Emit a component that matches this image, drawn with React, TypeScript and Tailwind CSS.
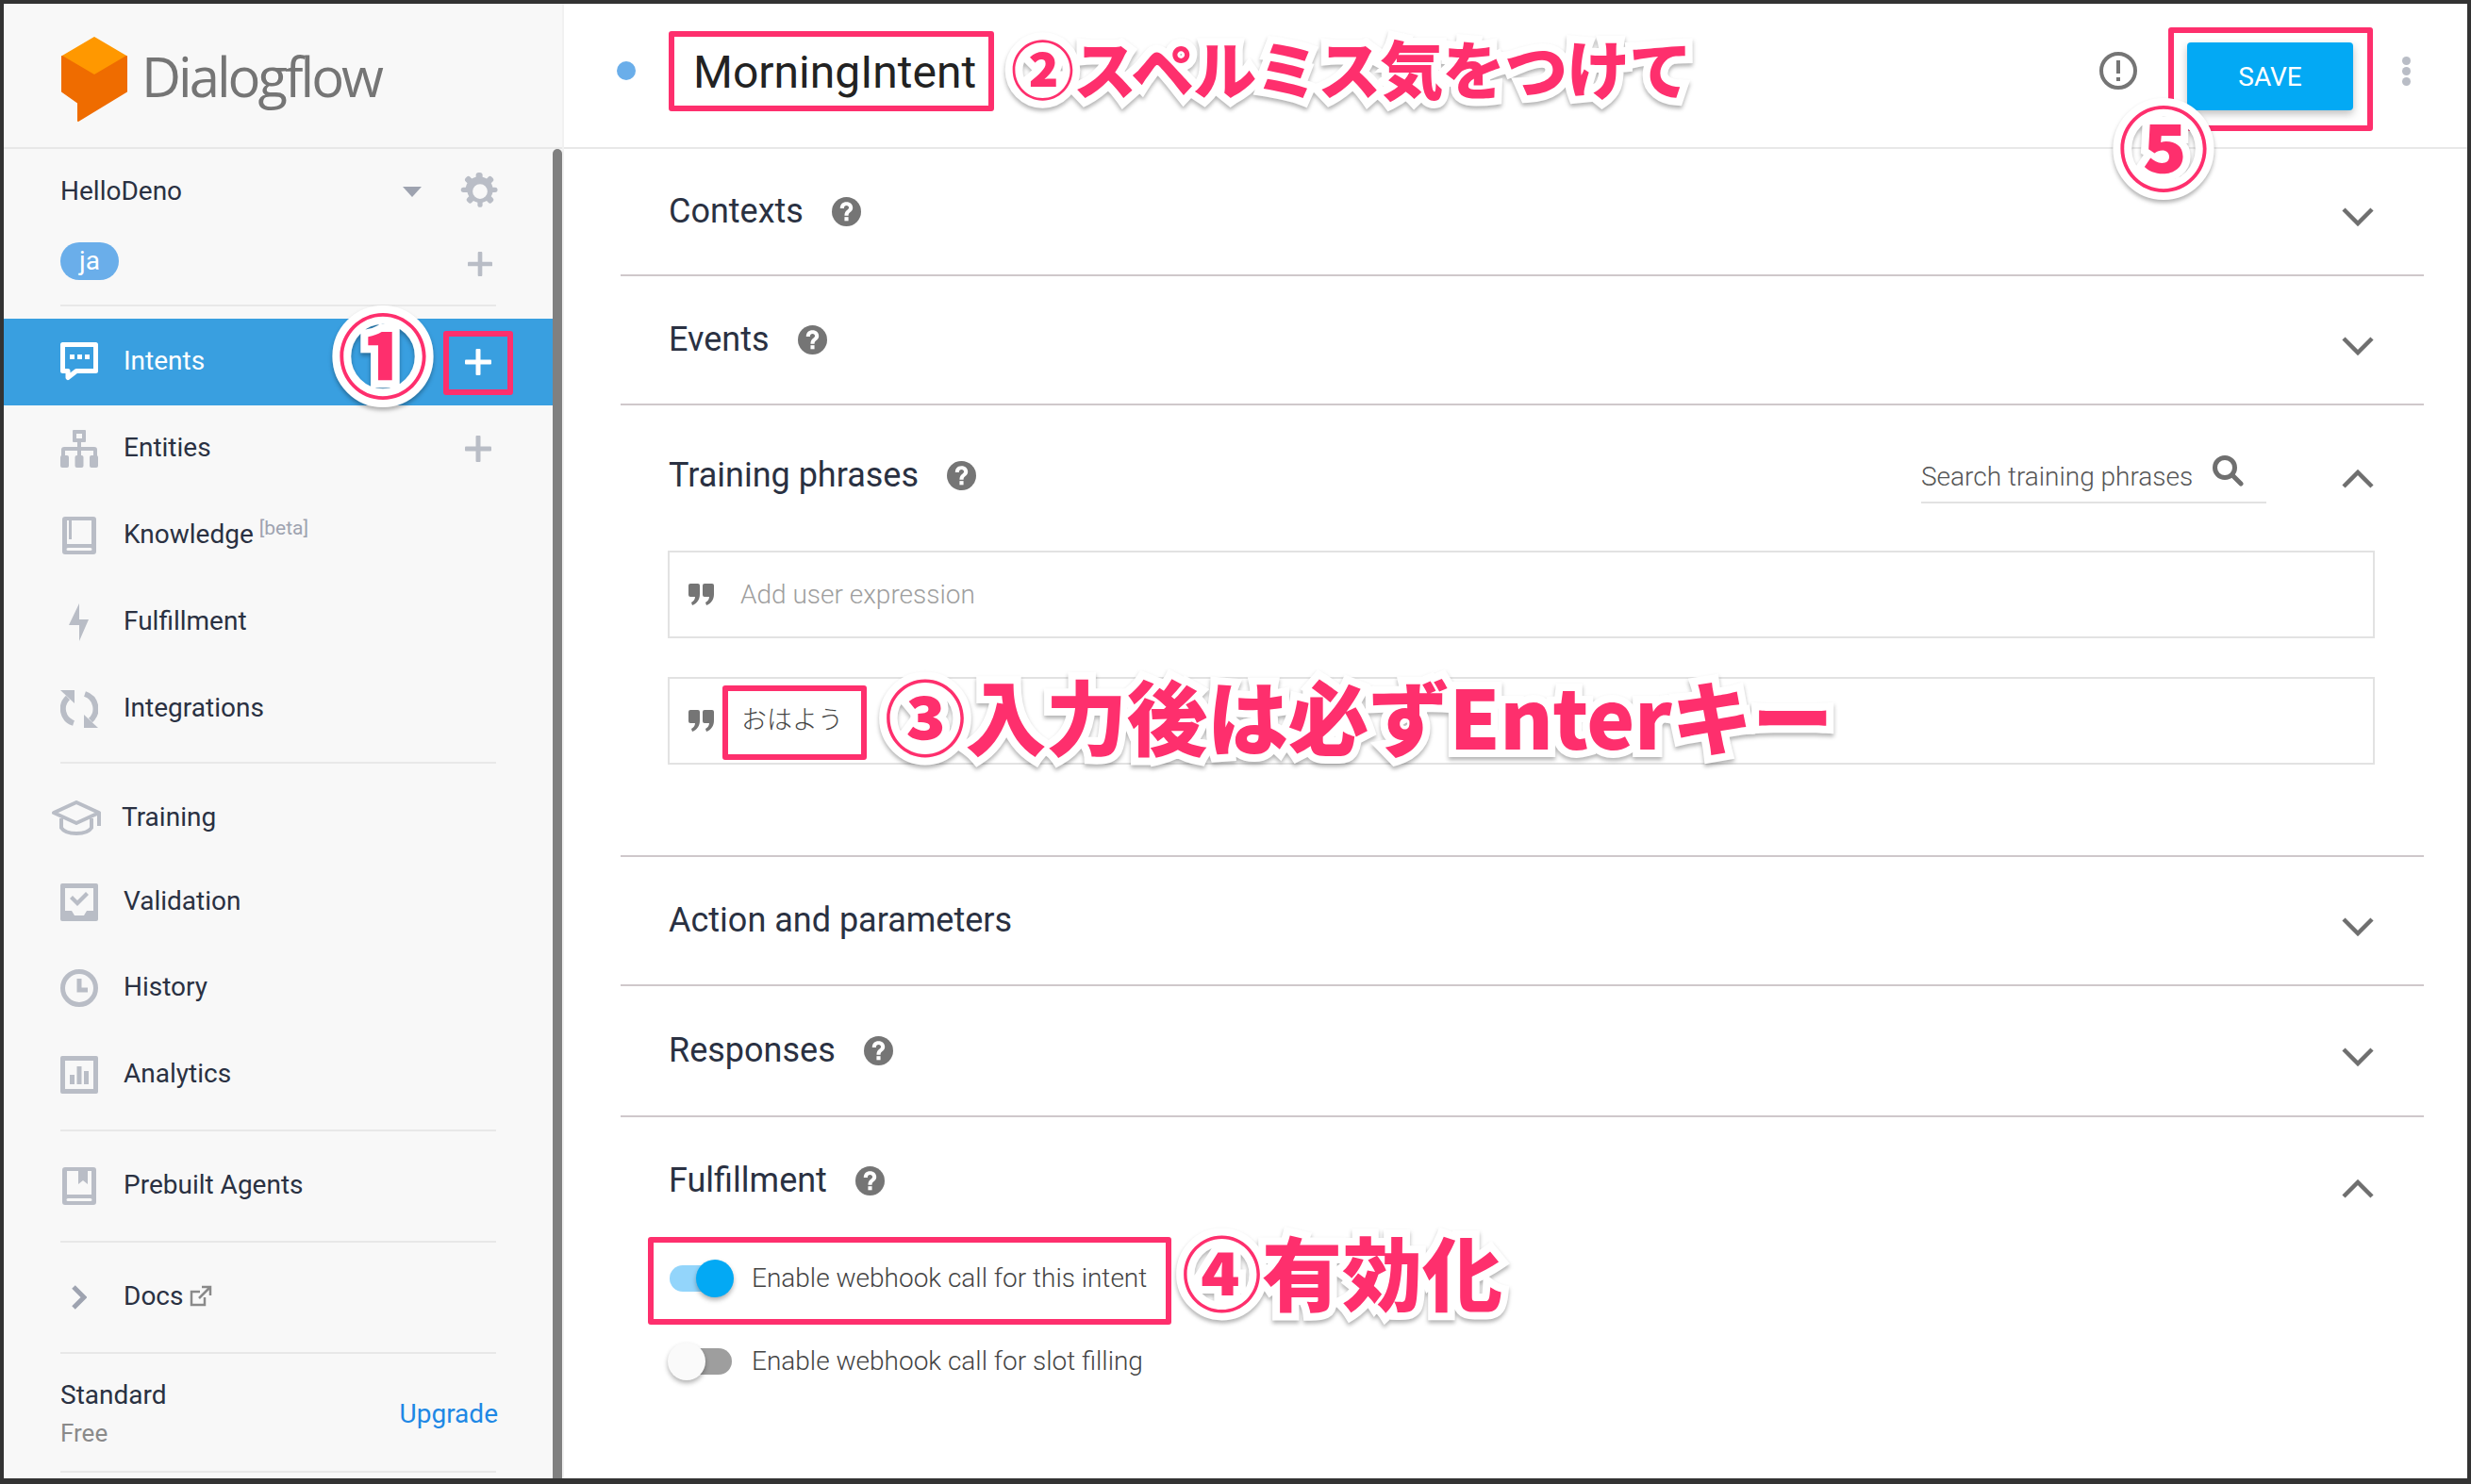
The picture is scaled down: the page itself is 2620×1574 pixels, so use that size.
import React from "react";

const ICON = "#b9bdc6";

const IntentsIcon = () => (
  <svg width="40" height="42" viewBox="0 0 40 42">
    <path d="M2.500 2.500h35v28H17l-9 7v-7H2.500z" fill="none" stroke="#fff" strokeWidth="5" strokeLinejoin="round" />
    <rect x="10" y="13" width="5" height="5" fill="#fff" />
    <rect x="18" y="13" width="5" height="5" fill="#fff" />
    <rect x="26" y="13" width="5" height="5" fill="#fff" />
  </svg>
);

const EntitiesIcon = () => (
  <svg width="40" height="40" viewBox="0 0 40 40" fill={ICON}>
    <path d="M14 0h12a1 1 0 0 1 1 1v11a1 1 0 0 1-1 1h-4v5h14a3 3 0 0 1 3 3v7h-4v-6H22v6h-4v-6H5v6H1v-7a3 3 0 0 1 3-3h14v-5h-4a1 1 0 0 1-1-1V1a1 1 0 0 1 1-1zm3 4v5h6V4z" fillRule="evenodd" />
    <rect x="0" y="27" width="9" height="13" rx="2" />
    <rect x="15.500" y="27" width="9" height="13" rx="2" />
    <rect x="31" y="27" width="9" height="13" rx="2" />
  </svg>
);

const KnowledgeIcon = () => (
  <svg width="36" height="40" viewBox="0 0 36 40" fill={ICON}>
    <path d="M3 0h30a3 3 0 0 1 3 3v34a3 3 0 0 1-3 3H3a3 3 0 0 1-3-3V3a3 3 0 0 1 3-3zm2 4v25h26V4H10v20H7V4zm1 29a1.500 1.500 0 0 0 0 3h24a1.500 1.500 0 0 0 0-3z" fillRule="evenodd" />
  </svg>
);

const PrebuiltIcon = () => (
  <svg width="36" height="40" viewBox="0 0 36 40" fill={ICON}>
    <path d="M3 0h30a3 3 0 0 1 3 3v34a3 3 0 0 1-3 3H3a3 3 0 0 1-3-3V3a3 3 0 0 1 3-3zm2 4v25h26V4h-4v14l-5-4-5 4V4zm1 29a1.500 1.500 0 0 0 0 3h24a1.500 1.500 0 0 0 0-3z" fillRule="evenodd" />
  </svg>
);

const BoltIcon = () => (
  <svg width="22" height="40" viewBox="0 0 22 40" fill={ICON}>
    <path d="M11 0v17h10L11 40V23H0z" />
  </svg>
);

const SyncIcon = () => (
  <svg width="40" height="40" viewBox="0 0 40 40" fill="none" stroke={ICON} strokeWidth="6">
    <path d="M8 8A16 16 0 0 0 14 35" />
    <path d="M26 4a16.500 16.500 0 0 1 6 28" />
    <path d="M0 0h15v14z" fill={ICON} stroke="none" />
    <path d="M40 40H25V26z" fill={ICON} stroke="none" />
  </svg>
);

const TrainingIcon = () => (
  <svg width="54" height="38" viewBox="0 0 54 38" fill="none" stroke={ICON} strokeWidth="4">
    <path d="M3 13 27 2l24 11-24 11z" strokeLinejoin="round" />
    <path d="M11 19v10c5 8 27 8 32 0V19" />
    <path d="M51 13v14" />
  </svg>
);

const ValidationIcon = () => (
  <svg width="40" height="40" viewBox="0 0 40 40" fill={ICON}>
    <path d="M2 0h36a2 2 0 0 1 2 2v36a2 2 0 0 1-2 2H2a2 2 0 0 1-2-2V2a2 2 0 0 1 2-2zm3 5v24h7l3 5h10l3-5h7V5z" fillRule="evenodd" />
    <path d="m10 16 3-3 5 5 9-9 3 3-12 12z" />
  </svg>
);

const HistoryIcon = () => (
  <svg width="40" height="40" viewBox="0 0 40 40" fill="none" stroke={ICON} strokeWidth="5">
    <circle cx="20" cy="20" r="17.500" />
    <path d="M20 10v12h9" />
  </svg>
);

const AnalyticsIcon = () => (
  <svg width="40" height="40" viewBox="0 0 40 40" fill={ICON}>
    <path d="M2 0h36a2 2 0 0 1 2 2v36a2 2 0 0 1-2 2H2a2 2 0 0 1-2-2V2a2 2 0 0 1 2-2zm3 5v30h30V5z" fillRule="evenodd" />
    <rect x="10" y="20" width="5" height="10" />
    <rect x="17.500" y="11" width="5" height="19" />
    <rect x="25" y="16" width="5" height="14" />
  </svg>
);

const DocsChevron = () => (
  <svg width="16" height="26" viewBox="0 0 16 26" fill="none" stroke="#9ea3b0" strokeWidth="5">
    <path d="m2 2 11 11L2 24" />
  </svg>
);

const PlusIcon = ({ color = ICON, size = 28 }: { color?: string; size?: number }) => (
  <svg width={size} height={size} viewBox="0 0 28 28" fill={color}>
    <rect x="11.500" y="0" width="5" height="28" rx="1" />
    <rect x="0" y="11.500" width="28" height="5" rx="1" />
  </svg>
);

const GearIcon = () => (
  <svg width="42" height="42" viewBox="0 0 24 24" fill={ICON}>
    <path
      fillRule="evenodd"
      d="M12 0.500c.8 0 1.500.6 1.500 1.400v1.400a8.800 8.800 0 0 1 2.500 1l1-1a1.500 1.500 0 0 1 2.100 0l.6.6a1.500 1.500 0 0 1 0 2.100l-1 1a8.800 8.800 0 0 1 1 2.500h1.400a1.500 1.500 0 0 1 0 3h-1.400a8.800 8.800 0 0 1-1 2.500l1 1a1.500 1.500 0 0 1 0 2.100l-.6.6a1.500 1.500 0 0 1-2.100 0l-1-1a8.800 8.800 0 0 1-2.500 1v1.400a1.500 1.500 0 0 1-3 0v-1.400a8.800 8.800 0 0 1-2.500-1l-1 1a1.500 1.500 0 0 1-2.100 0l-.6-.6a1.500 1.500 0 0 1 0-2.100l1-1a8.800 8.800 0 0 1-1-2.500H1.900a1.500 1.500 0 0 1 0-3h1.400a8.800 8.800 0 0 1 1-2.500l-1-1a1.500 1.500 0 0 1 0-2.100l.6-.6a1.500 1.500 0 0 1 2.100 0l1 1a8.800 8.800 0 0 1 2.500-1V1.900c0-.8.7-1.400 1.500-1.400zM12 7.500a4.500 4.500 0 1 0 0 9 4.500 4.500 0 0 0 0-9z"
    />
  </svg>
);

const HelpIcon = () => (
  <svg width="31" height="31" viewBox="0 0 30 30">
    <circle cx="15" cy="15" r="15" fill="#757575" />
    <path d="M8.500 11.500C8.500 7.500 11 5 15 5s6.500 2.500 6.500 6c0 4.500-4.500 4.500-4.500 8h-4c0-5.500 4.500-5.500 4.500-8 0-1.200-1-2.200-2.500-2.200s-2.500 1-2.500 2.700z" fill="#fff" />
    <rect x="13" y="20.500" width="4" height="4" fill="#fff" />
  </svg>
);

const Chevron = ({ up = false }: { up?: boolean }) => (
  <svg width="34" height="20" viewBox="0 0 34 20" fill="none" stroke="#6f6f6f" strokeWidth="4.500">
    <path d={up ? "M2 18 17 3l15 15" : "m2 2 15 15L32 2"} />
  </svg>
);

const QuoteIcon = () => (
  <svg width="27" height="23" viewBox="0 0 27 23" fill="#757575">
    <path d="M2 0h8a2 2 0 0 1 2 2v9c0 6-3 10-8 12l-1-3c2-1 4-3 4-6H2a2 2 0 0 1-2-2V2a2 2 0 0 1 2-2z" />
    <path d="M17 0h8a2 2 0 0 1 2 2v9c0 6-3 10-8 12l-1-3c2-1 4-3 4-6h-5a2 2 0 0 1-2-2V2a2 2 0 0 1 2-2z" />
  </svg>
);

const NavRow = ({
  icon,
  label,
  className,
  children,
}: {
  icon: React.ReactNode;
  label: React.ReactNode;
  className: string;
  children?: React.ReactNode;
}) => (
  <div className={`flex items-center ${className}`}>
    <div className="w-[127px] pl-[60px] shrink-0">
      <div className="w-[40px] flex justify-center">{icon}</div>
    </div>
    <div className="flex-1 flex items-center pb-[3px]">{label}</div>
    {children}
  </div>
);

const Separator = ({ className }: { className: string }) => (
  <div className={`ml-[60px] w-[462px] h-[2px] bg-[#e8e8e8] ${className}`} />
);

const Section = ({
  title,
  help = true,
  up = false,
  chevron = "mt-[12px]",
  className,
  children,
}: {
  title: string;
  help?: boolean;
  up?: boolean;
  chevron?: string;
  className: string;
  children?: React.ReactNode;
}) => (
  <div className={`flex items-center pl-[51px] pr-[53px] ${className}`}>
    <span className="text-[36px] text-[#2a3142] mr-[30px] pb-[1px]">{title}</span>
    {help && <HelpIcon />}
    <div className="flex-1" />
    {children}
    <div className={chevron}>
      <Chevron up={up} />
    </div>
  </div>
);

const Divider = () => <div className="h-[2px] bg-[#cfc8cb]" />;

const Toggle = ({ on }: { on: boolean }) => (
  <div className="relative w-[70px] h-[40px] flex items-center shrink-0">
    <div className={`h-[28px] w-[66px] rounded-full ml-[2px] ${on ? "bg-[#93d5fb]" : "bg-[#9e9e9e]"}`} />
    <div
      className={`absolute top-0 w-[40px] h-[40px] rounded-full shadow-[0_3px_5px_rgba(0,0,0,0.3)] ${
        on ? "right-0 bg-[#03a9f4]" : "left-0 bg-[#fafafa]"
      }`}
    />
  </div>
);

const PinkBox = ({ className }: { className: string }) => (
  <div className={`absolute border-[6px] border-[#fe2f6d] rounded-[3px] ${className}`} />
);

const Callout = ({ className, children }: { className: string; children: React.ReactNode }) => (
  <div
    className={`absolute font-['Noto_Sans_CJK_JP',sans-serif] font-black text-[#fe2f6d] whitespace-nowrap [-webkit-text-stroke:16px_white] [paint-order:stroke_fill] drop-shadow-[0_3px_2px_rgba(0,0,0,0.3)] ${className}`}
  >
    {children}
  </div>
);

export default function App() {
  return (
    <div className="relative w-[2620px] h-[1574px] overflow-hidden bg-[#333333] pt-[4px] pl-[4px] pr-[4px] pb-[6px] flex font-['Roboto','Noto_Sans_CJK_JP',sans-serif]">
      {/* Sidebar */}
      <aside className="w-[592px] shrink-0 bg-[#f8f8f8] flex flex-col">
        <div className="h-[154px] shrink-0 border-b-2 border-[#e8e8e8] flex items-center pl-[60px] gap-[14px]">
          <svg width="72" height="92" viewBox="0 0 72 92" className="mt-[10px]">
            <path d="M36 1 70 21v18L36 41 2 39V21z" fill="#ff9800" stroke="#ff9800" strokeWidth="2" strokeLinejoin="round" />
            <path d="M2 21 36 41 70 21v37L19 89V70L2 58z" fill="#ef6c00" stroke="#ef6c00" strokeWidth="2" strokeLinejoin="round" />
          </svg>
          <span className="font-['Open_Sans'] text-[58px] tracking-[-3px] text-[#757575]">Dialogflow</span>
        </div>
        <div className="flex-1 flex min-h-0">
          <nav className="flex-1 flex flex-col text-[28px] text-[#2a3142] overflow-hidden">
            <div className="h-[88px] shrink-0 flex items-center pl-[60px] pr-[56px] pt-[2px]">
              <span className="flex-1">HelloDeno</span>
              <div className="w-0 h-0 border-x-[10px] border-x-transparent border-t-[11px] border-t-[#9ea3b0] mr-[41px]" />
              <GearIcon />
            </div>
            <div className="h-[62px] shrink-0 flex items-center pl-[60px] pr-[64px]">
              <div className="flex-1">
                <span className="inline-flex items-center justify-center w-[62px] h-[40px] rounded-full bg-[#6aaeea] text-white">ja</span>
              </div>
              <div className="mt-[6px]">
                <PlusIcon size={26} />
              </div>
            </div>
            <Separator className="mt-[15px]" />
            <NavRow icon={<IntentsIcon />} label={<span className="text-white">Intents</span>} className="h-[92px] mt-[13px] shrink-0 bg-[#399fe0]">
              <div className="mr-[65px]">
                <PlusIcon color="#fff" />
              </div>
            </NavRow>
            <NavRow icon={<EntitiesIcon />} label="Entities" className="h-[92px] shrink-0">
              <div className="mr-[65px]">
                <PlusIcon />
              </div>
            </NavRow>
            <NavRow
              icon={<KnowledgeIcon />}
              label={
                <>
                  Knowledge
                  <span className="text-[21px] text-[#9ea3b0] ml-[6px] mb-[12px]">[beta]</span>
                </>
              }
              className="h-[92px] shrink-0"
            />
            <NavRow icon={<BoltIcon />} label="Fulfillment" className="h-[92px] shrink-0" />
            <NavRow icon={<SyncIcon />} label="Integrations" className="h-[92px] shrink-0" />
            <Separator className="mt-[10px]" />
            <NavRow icon={<div className="-ml-[6px]"><TrainingIcon /></div>} label={<span className="-ml-[2px]">Training</span>} className="h-[88px] mt-[14px] shrink-0" />
            <NavRow icon={<ValidationIcon />} label="Validation" className="h-[90px] shrink-0" />
            <NavRow icon={<HistoryIcon />} label="History" className="h-[92px] shrink-0" />
            <NavRow icon={<AnalyticsIcon />} label="Analytics" className="h-[92px] shrink-0" />
            <Separator className="mt-[12px]" />
            <NavRow icon={<PrebuiltIcon />} label="Prebuilt Agents" className="h-[92px] mt-[12px] shrink-0" />
            <Separator className="mt-[12px]" />
            <NavRow
              icon={<DocsChevron />}
              label={
                <>
                  Docs
                  <svg width="24" height="24" viewBox="0 0 24 24" fill="none" stroke="#8a8a8a" strokeWidth="2.500" className="ml-[7px]">
                    <path d="M16 13v8H2V7h9" />
                    <path d="M10 14 21 3M13 2h9v9" />
                  </svg>
                </>
              }
              className="h-[92px] mt-[12px] shrink-0"
            />
            <Separator className="mt-[12px]" />
            <div className="h-[124px] shrink-0 flex items-center pl-[60px] pr-[58px]">
              <div className="flex-1 flex flex-col gap-[10px] mt-[3px]">
                <span className="leading-[30px]">Standard</span>
                <span className="leading-[30px] text-[26px] text-[#8a8a8a]">Free</span>
              </div>
              <span className="text-[#1e88e5] mt-[3px]">Upgrade</span>
            </div>
            <Separator className="" />
          </nav>
          <div className="w-[10px] shrink-0 bg-[#808080] rounded-t-[5px]" />
        </div>
      </aside>

      {/* Main */}
      <main className="flex-1 bg-white flex flex-col min-w-0 border-l-2 border-[#f1f1f1]">
        <header className="h-[154px] shrink-0 border-b-2 border-[#e8e8e8] flex items-center pl-[56px] pr-[60px]">
          <div className="w-[20px] h-[20px] rounded-full bg-[#6aaeea] mb-[10px]" />
          <span className="text-[48px] text-[#222222] ml-[61px] flex-1 pb-[6px]">MorningIntent</span>
          <svg width="40" height="40" viewBox="0 0 40 40" fill="none" className="mr-[53px] mb-[10px]">
            <circle cx="20" cy="20" r="18" stroke="#757575" strokeWidth="4" />
            <rect x="18" y="9" width="4" height="14" fill="#757575" />
            <rect x="18" y="27" width="4" height="4" fill="#757575" />
          </svg>
          <button className="w-[176px] h-[72px] rounded-[4px] bg-[#03a9f4] text-white text-[28px] shadow-[0_4px_8px_rgba(0,0,0,0.25)] mr-[52px] mt-[2px] pt-[2px]">SAVE</button>
          <div className="flex flex-col gap-[2px] mb-[10px]">
            <div className="w-[9px] h-[9px] rounded-full bg-[#b9bdc6]" />
            <div className="w-[9px] h-[9px] rounded-full bg-[#b9bdc6]" />
            <div className="w-[9px] h-[9px] rounded-full bg-[#b9bdc6]" />
          </div>
        </header>

        <div className="flex-1 flex flex-col pl-[60px] pr-[46px] min-h-0">
          <Section title="Contexts" chevron="mt-[10px]" className="h-[133px] shrink-0" />
          <Divider />
          <Section title="Events" className="h-[135px] shrink-0" />
          <Divider />
          <Section title="Training phrases" up chevron="mt-[7px]" className="h-[148px] shrink-0">
            <div className="flex items-center w-[366px] h-[60px] border-b-2 border-[#e2e2e2] mr-[80px] pt-[6px]">
              <span className="text-[28px] font-light text-[#555555] flex-1">Search training phrases</span>
              <svg width="34" height="34" viewBox="0 0 34 34" fill="none" stroke="#6f6f6f" strokeWidth="5" className="mr-[24px] -mt-[14px]">
                <circle cx="14" cy="14" r="10.500" />
                <path d="m22 22 9 9" strokeLinecap="round" />
              </svg>
            </div>
          </Section>
          <div className="ml-[50px] mr-[52px] mt-[6px] h-[93px] shrink-0 border-2 border-[#e2e2e2] flex items-center pl-[20px]">
            <QuoteIcon />
            <span className="ml-[28px] text-[28px] font-light text-[#9e9e9e]">Add user expression</span>
          </div>
          <div className="ml-[50px] mr-[52px] mt-[41px] h-[93px] shrink-0 border-2 border-[#e2e2e2] flex items-center pl-[20px]">
            <QuoteIcon />
            <span className="ml-[29px] text-[27px] font-light text-[#444444]">おはよう</span>
          </div>
          <div className="h-[96px] shrink-0" />
          <Divider />
          <Section title="Action and parameters" help={false} className="h-[135px] shrink-0" />
          <Divider />
          <Section title="Responses" className="h-[137px] shrink-0" />
          <Divider />
          <Section title="Fulfillment" up chevron="mt-[18px]" className="h-[134px] shrink-0" />
          <div className="flex flex-col pl-[50px] text-[28px] font-light text-[#444444] pt-[7px]">
            <div className="h-[60px] flex items-center gap-[19px]">
              <Toggle on />
              <span>Enable webhook call for this intent</span>
            </div>
            <div className="h-[60px] mt-[28px] flex items-center gap-[19px]">
              <Toggle on={false} />
              <span>Enable webhook call for slot filling</span>
            </div>
          </div>
        </div>
      </main>

      {/* Annotations */}
      <PinkBox className="left-[470px] top-[351px] w-[74px] h-[68px]" />
      <PinkBox className="left-[709px] top-[33px] w-[345px] h-[85px]" />
      <PinkBox className="left-[2299px] top-[29px] w-[217px] h-[110px]" />
      <PinkBox className="left-[766px] top-[727px] w-[153px] h-[79px]" />
      <PinkBox className="left-[687px] top-[1312px] w-[555px] h-[93px]" />

      <Callout className="left-[358px] top-[313px] text-[96px] leading-[120px]">①</Callout>
      <Callout className="left-[2246px] top-[93px] text-[96px] leading-[120px]">⑤</Callout>
      <Callout className="left-[1072px] top-[26px] text-[67px] leading-[90px] tracking-[-1px]">②スペルミス気をつけて</Callout>
      <Callout className="left-[938px] top-[708px] text-[86px] leading-[100px] tracking-[-0.5px]">③入力後は必ずEnterキー</Callout>
      <Callout className="left-[1253px] top-[1297px] text-[85px] leading-[100px]">④有効化</Callout>
    </div>
  );
}
